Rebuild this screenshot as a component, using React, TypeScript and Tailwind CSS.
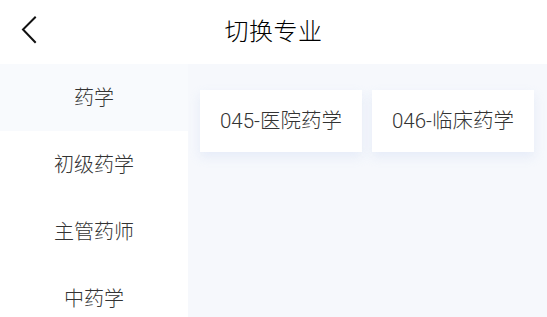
import React from 'react'

const categories = ['药学', '初级药学', '主管药师', '中药学']
const majors = ['045-医院药学', '046-临床药学']

function BackIcon() {
  return (
    <svg width="16" height="28" viewBox="0 0 16 28" fill="none" className="block">
      <path d="M14 1.5L2 13.5L14 26" stroke="#111" strokeWidth="2" strokeLinecap="square" />
    </svg>
  )
}

export default function App() {
  const active = 0
  return (
    <div
      className="w-[547px] h-[317px] overflow-hidden bg-white flex flex-col"
      style={{ fontFamily: 'Roboto, "Noto Sans CJK SC", "Noto Sans", sans-serif' }}
    >
      <header className="h-[64px] shrink-0 relative flex items-center justify-center">
        <button className="absolute left-[21px] top-[16px]">
          <BackIcon />
        </button>
        <h1 className="text-[24px] font-light text-[#000] leading-none tracking-[0.5px]">切换专业</h1>
      </header>
      <div className="flex flex-1 min-h-0">
        <aside className="w-[188px] shrink-0 flex flex-col">
          {categories.map((c, i) => (
            <div
              key={c}
              className={
                'h-[67px] shrink-0 flex items-center justify-center text-[20px] font-light text-[#333] ' +
                (i === active ? 'bg-[#f8fafd]' : 'bg-white')
              }
            >
              {c}
            </div>
          ))}
        </aside>
        <main className="flex-1 bg-[#f6f8fc] pt-[26px] pl-[12px] pr-[12px]">
          <div className="flex gap-[10px]">
            {majors.map((m) => (
              <div
                key={m}
                className="w-[162px] h-[62px] bg-white flex items-center justify-center text-[20.5px] font-light text-[#333] shadow-[0_5px_10px_rgba(210,222,245,0.45)]"
              >
                {m}
              </div>
            ))}
          </div>
        </main>
      </div>
    </div>
  )
}
